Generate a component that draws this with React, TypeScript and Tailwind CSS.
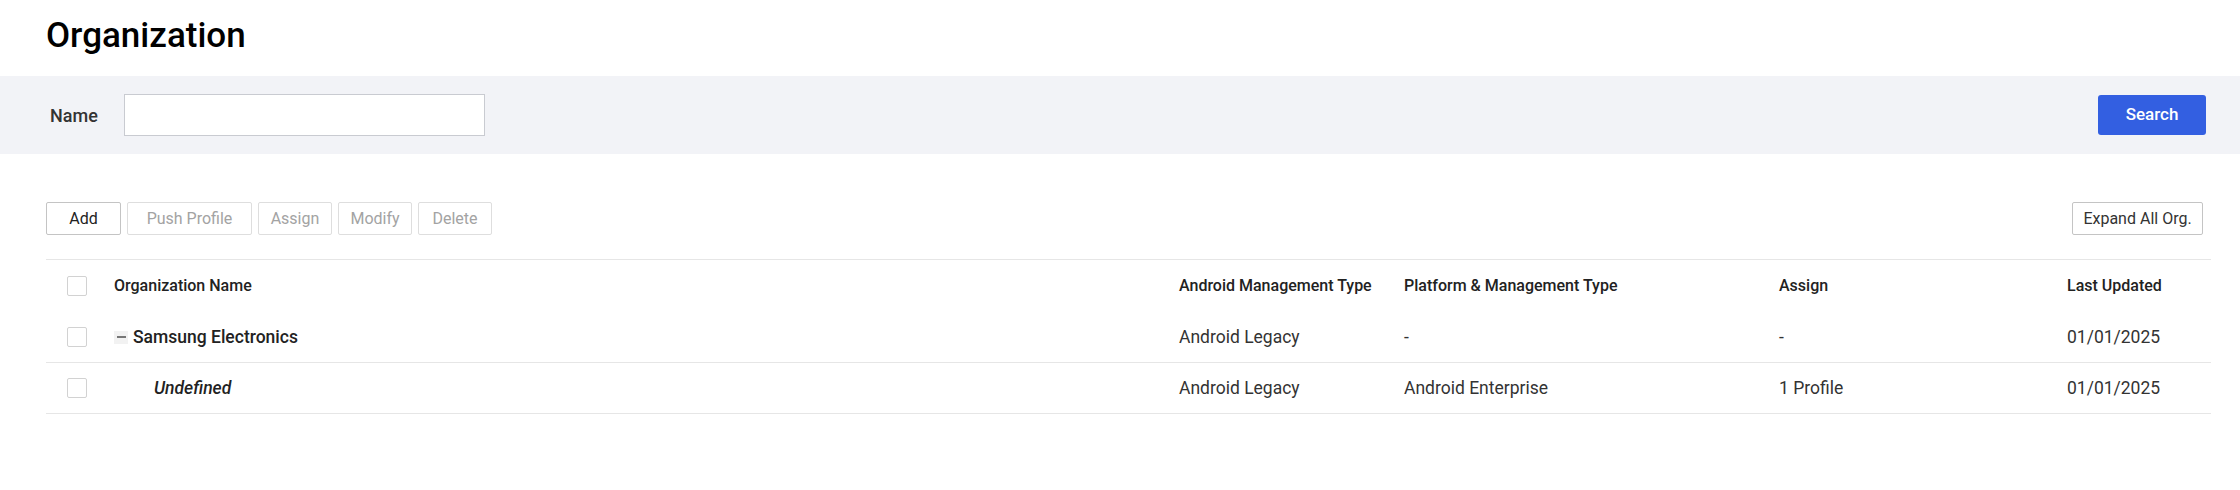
import React, { useState } from "react";

type Row = {
  name: string;
  level: number;
  android: string;
  platform: string;
  assign: string;
  updated: string;
};

const rows: Row[] = [
  {
    name: "Samsung Electronics",
    level: 0,
    android: "Android Legacy",
    platform: "-",
    assign: "-",
    updated: "01/01/2025",
  },
  {
    name: "Undefined",
    level: 1,
    android: "Android Legacy",
    platform: "Android Enterprise",
    assign: "1 Profile",
    updated: "01/01/2025",
  },
];

const cols = "grid grid-cols-[68px_1065px_225px_375px_288px_1fr] items-center";

const Checkbox = () => (
  <span className="block w-[20px] h-[20px] ml-[21px] border border-[#d2d2d2] rounded-[2px] bg-white" />
);

const ToolButton = ({
  label,
  width,
  disabled,
}: {
  label: string;
  width: string;
  disabled?: boolean;
}) => (
  <button
    type="button"
    className={
      disabled
        ? `${width} h-[33px] border border-[#dedede] rounded-[2px] bg-white text-[16px] text-[#a3a3a3]`
        : `${width} h-[33px] border border-[#c4c4c4] rounded-[2px] bg-white text-[16px] text-[#222]`
    }
  >
    {label}
  </button>
);

const App = () => {
  const [name, setName] = useState("");

  const handleChange = (e: React.ChangeEvent<HTMLInputElement>) => {
    setName(e.target.value);
  };

  return (
    <div className="min-h-[490px] bg-white font-['Roboto',sans-serif] text-[#333]">
      <div className="pl-[46px] pt-[16px] pb-[20px]">
        <h1 className="text-[35px] leading-[40px] font-medium text-black">Organization</h1>
      </div>

      <div className="h-[78px] bg-[#f2f3f7] flex items-center pl-[50px] pr-[34px]">
        <label htmlFor="name" className="text-[18px] font-medium text-[#333]">
          Name
        </label>
        <input
          id="name"
          type="text"
          value={name}
          onChange={handleChange}
          className="ml-[26px] w-[361px] h-[42px] border border-[#c9cbd1] bg-white px-3 text-[16px] outline-none"
        />
        <button
          type="button"
          className="ml-auto w-[108px] h-[40px] rounded-[3px] bg-[#335fe1] text-white text-[17px] font-medium"
        >
          Search
        </button>
      </div>

      <div className="mt-[48px] pl-[46px] pr-[37px] flex items-center">
        <div className="flex gap-[6px]">
          <ToolButton label="Add" width="w-[75px]" />
          <ToolButton label="Push Profile" width="w-[125px]" disabled />
          <ToolButton label="Assign" width="w-[74px]" disabled />
          <ToolButton label="Modify" width="w-[74px]" disabled />
          <ToolButton label="Delete" width="w-[74px]" disabled />
        </div>
        <button
          type="button"
          className="ml-auto w-[131px] h-[33px] border border-[#c4c4c4] rounded-[2px] bg-white text-[16px] text-[#333]"
        >
          Expand All Org.
        </button>
      </div>

      <div className="mt-[24px] ml-[46px] mr-[29px] border-t border-[#e6e6e6]">
        <div className={`${cols} h-[52px] text-[16px] font-medium text-[#222]`}>
          <Checkbox />
          <div>Organization Name</div>
          <div>Android Management Type</div>
          <div>Platform &amp; Management Type</div>
          <div>Assign</div>
          <div>Last Updated</div>
        </div>
        {rows.map((row) => (
          <div
            key={row.name}
            className={`${cols} h-[51px] border-b border-[#e6e6e6] text-[17.5px] leading-[24px] text-[#333]`}
          >
            <Checkbox />
            <div className="flex items-center">
              {row.level === 0 ? (
                <>
                  <span className="w-[14px] h-[13px] bg-[#f2f2f2] flex items-center justify-center mr-[5px]">
                    <span className="block w-[9px] h-[1.5px] bg-[#777]" />
                  </span>
                  <span className="font-medium text-[#222]">{row.name}</span>
                </>
              ) : (
                <span className="ml-[40px] italic font-medium text-[#222]">{row.name}</span>
              )}
            </div>
            <div>{row.android}</div>
            <div>{row.platform}</div>
            <div>{row.assign}</div>
            <div>{row.updated}</div>
          </div>
        ))}
      </div>
    </div>
  );
};

export default App;
